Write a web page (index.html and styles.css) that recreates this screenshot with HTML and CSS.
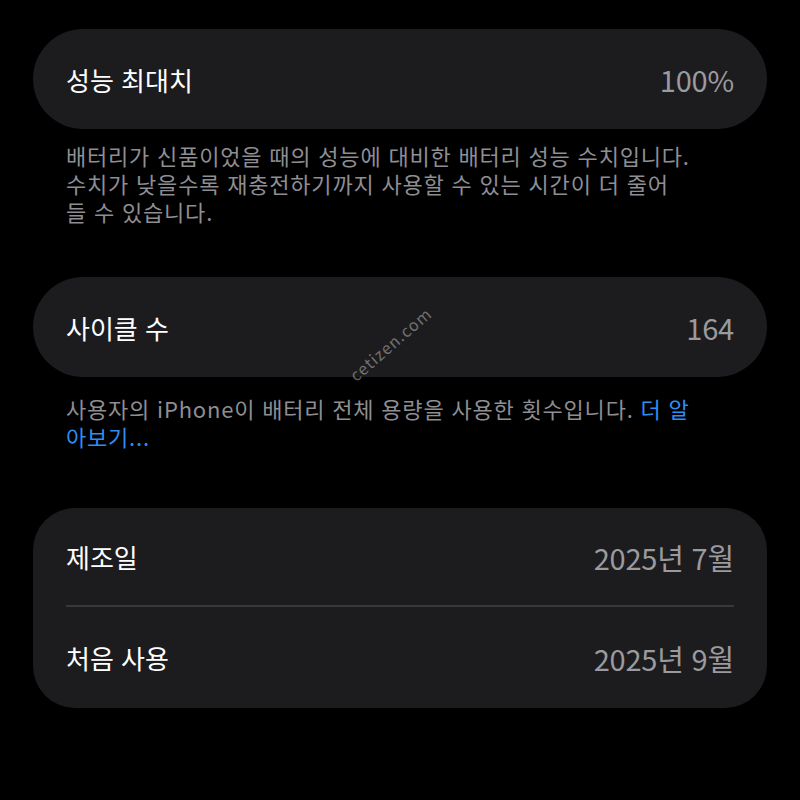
FILE: index.html
```html
<!DOCTYPE html>
<html lang="ko">

<head>
    <meta charset="utf-8">
    <title>배터리 성능</title>
    <link rel="stylesheet" href="styles.css">
</head>

<body>
    <div class="page">
        <div class="card pill">
            <div class="row">
                <span class="label">성능 최대치</span>
                <span class="value">100%</span>
            </div>
        </div>
        <p class="note">배터리가 신품이었을 때의 성능에 대비한 배터리 성능 수치입니다. 수치가 낮을수록 재충전하기까지 사용할 수 있는 시간이 더 줄어 들 수 있습니다.</p>

        <div class="card pill">
            <div class="row">
                <span class="label">사이클 수</span>
                <span class="value">164</span>
            </div>
            <span class="watermark">cetizen.com</span>
        </div>
        <p class="note second">사용자의 iPhone이 배터리 전체 용량을 사용한 횟수입니다. <a href="#">더 알아보기...</a></p>

        <div class="card group">
            <div class="row">
                <span class="label">제조일</span>
                <span class="value">2025년 7월</span>
            </div>
            <div class="divider"></div>
            <div class="row">
                <span class="label">처음 사용</span>
                <span class="value">2025년 9월</span>
            </div>
        </div>
    </div>
</body>

</html>
```

FILE: styles.css
```css
html, body {
    margin: 0;
    background: #000;
}

body {
    font-family: "Noto Sans CJK KR", "Noto Sans", sans-serif;
    color: #fff;
}

.page {
    padding: 29px 33px 0 33px;
}

.card {
    position: relative;
    background: #1c1c1e;
}

.card.pill {
    border-radius: 50px;
}

.card.group {
    border-radius: 42px;
    margin-top: 58px;
}

.row {
    height: 100px;
    display: flex;
    align-items: center;
    justify-content: space-between;
    padding: 0 33px;
}

.group .row:first-child {
    height: 97px;
}

.group .row:last-child {
    height: 101px;
}

.label {
    font-size: 26px;
    letter-spacing: 0;
}

.value {
    font-size: 29px;
    letter-spacing: -0.2px;
    color: #9a9a9f;
}

.divider {
    height: 2px;
    background: #38383a;
    margin: 0 33px;
}

.note {
    margin: 12px 0 52px 0;
    padding: 0 33px;
    width: 628px;
    font-size: 22px;
    line-height: 28px;
    letter-spacing: 0.8px;
    color: #8e8e93;
}

.note.second {
    margin-top: 17px;
    margin-bottom: 0;
}

.note a {
    color: #2f8ef0;
    text-decoration: none;
}

.watermark {
    position: absolute;
    left: 324px;
    top: 90px;
    line-height: 16px;
    transform: rotate(-41deg);
    transform-origin: left bottom;
    font-size: 16px;
    color: rgba(255, 255, 255, 0.38);
    letter-spacing: 1.1px;
}
```
